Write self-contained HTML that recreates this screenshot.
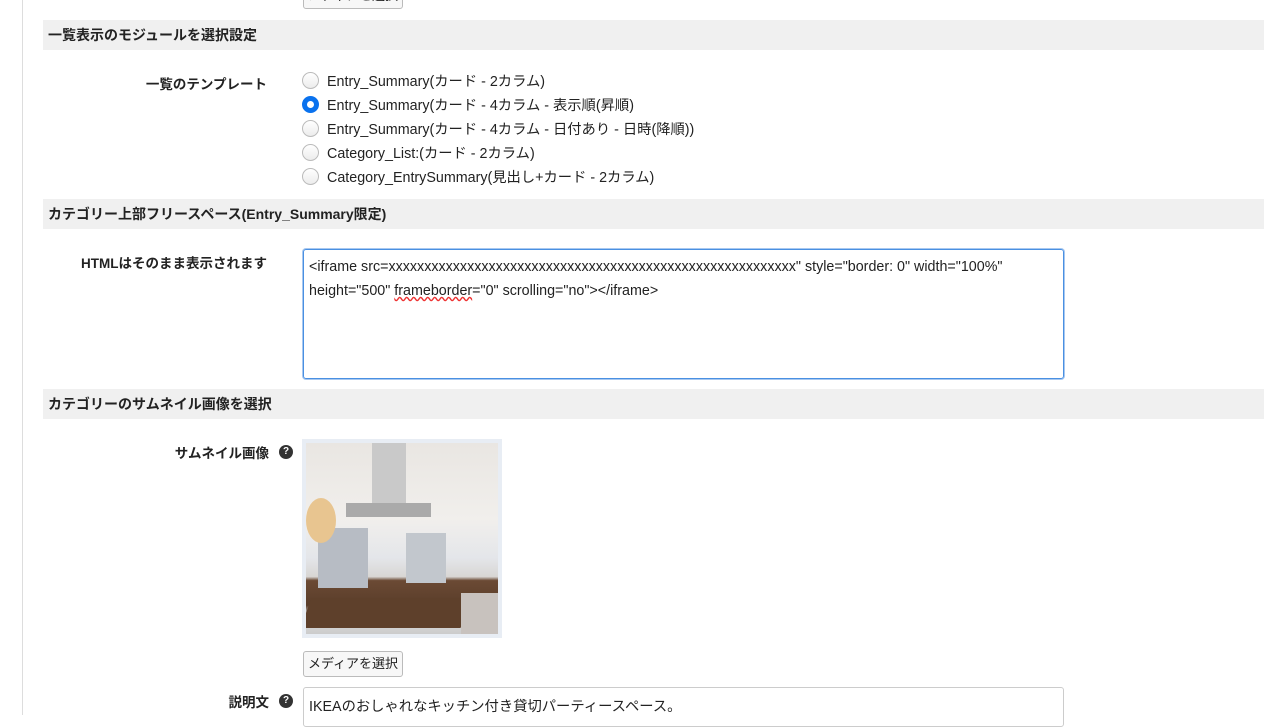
<!DOCTYPE html>
<html><head><meta charset="utf-8"><style>
body{margin:0;width:1280px;height:715px;overflow:hidden;background:#fff;font-family:"Liberation Sans","Noto Sans CJK JP",sans-serif;font-size:14px;color:#222;position:relative}
.a{position:absolute}
.vl{left:22px;top:0;width:1px;height:715px;background:#ddd}
.hd{left:43px;width:1221px;height:30px;background:#f0f0f0;font-weight:bold;font-size:14px;line-height:30px;padding-left:5px;box-sizing:border-box}
.lbl{font-weight:bold;font-size:13.5px;text-align:right;width:225px;left:42px}
.btn{border:1px solid #bbb;border-radius:3px;background:#f7f7f7;font-size:13px;text-align:center;box-sizing:border-box;width:100px;height:26px;line-height:24px}
.r{left:302px;font-size:14.3px;height:20px;line-height:20px}
.r i{display:inline-block;width:17px;height:17px;border-radius:50%;border:1px solid #bbb;background:linear-gradient(#fff,#ececec);box-sizing:border-box;vertical-align:-3px;margin-right:8px}
.r i.on{border:5px solid #0a72ee;background:#fff}
.q{width:14px;height:14px;border-radius:50%;background:#333;color:#fff;font-size:10px;font-weight:bold;text-align:center;line-height:14px}
</style></head><body>
<div class="a vl"></div>
<div class="a btn" style="left:303px;top:-17px">メディアを選択</div>
<div class="a hd" style="top:20px">一覧表示のモジュールを選択設定</div>
<div class="a lbl" style="top:73px">一覧のテンプレート</div>
<div class="a r" style="top:72px"><i></i>Entry_Summary(カード - 2カラム)</div>
<div class="a r" style="top:96px"><i class="on"></i>Entry_Summary(カード - 4カラム - 表示順(昇順)</div>
<div class="a r" style="top:120px"><i></i>Entry_Summary(カード - 4カラム - 日付あり - 日時(降順))</div>
<div class="a r" style="top:144px"><i></i>Category_List:(カード - 2カラム)</div>
<div class="a r" style="top:168px"><i></i>Category_EntrySummary(見出し+カード - 2カラム)</div>
<div class="a hd" style="top:199px">カテゴリー上部フリースペース(Entry_Summary限定)</div>
<div class="a lbl" style="top:252px">HTMLはそのまま表示されます</div>
<div class="a" style="left:303px;top:249px;width:761px;height:130px;border:1px solid #4a90e2;border-radius:3px;box-shadow:0 0 0 1px #a8c8f0;box-sizing:border-box;padding:5px 5px;font-size:14.3px;line-height:24px">&lt;iframe src=xxxxxxxxxxxxxxxxxxxxxxxxxxxxxxxxxxxxxxxxxxxxxxxxxxxxxxxxx" style="border: 0" width="100%" height="500" <span style="text-decoration:underline wavy #e33">frameborder</span>="0" scrolling="no"&gt;&lt;/iframe&gt;</div>
<div class="a hd" style="top:389px">カテゴリーのサムネイル画像を選択</div>
<div class="a lbl" style="top:442px;width:227px">サムネイル画像</div>
<div class="a q" style="left:279px;top:445px">?</div>
<div class="a" style="left:302px;top:439px;width:200px;height:199px;background:#e8edf4"></div>
<div class="a" style="left:306px;top:443px;width:192px;height:191px;background:linear-gradient(#e9e6e2 0%,#f1efec 40%,#e4e6ea 60%,#d8d6d4 70%,#6b4a34 72%,#5a3d2a 85%,#ddd 90%,#ccc 100%);overflow:hidden">
<div class="a" style="left:12px;top:85px;width:50px;height:60px;background:#b7bcc4"></div>
<div class="a" style="left:100px;top:90px;width:40px;height:50px;background:#c2c7cd"></div>
<div class="a" style="left:66px;top:0;width:34px;height:60px;background:#c9c9c9"></div>
<div class="a" style="left:40px;top:60px;width:85px;height:14px;background:#aaa"></div>
<div class="a" style="left:0;width:30px;height:45px;border-radius:50%;background:#e8c590;top:55px"></div>
<div class="a" style="left:0;top:155px;width:160px;height:30px;background:#5e402b;transform:skewX(-20deg)"></div>
<div class="a" style="left:155px;top:150px;width:37px;height:41px;background:#c8c2be"></div>
</div>
<div class="a btn" style="left:303px;top:651px">メディアを選択</div>
<div class="a lbl" style="top:691px;width:227px">説明文</div>
<div class="a q" style="left:279px;top:694px">?</div>
<div class="a" style="left:303px;top:687px;width:761px;height:40px;border:1px solid #ccc;border-radius:3px;box-sizing:border-box;padding:7px 5px;font-size:14.3px">IKEAのおしゃれなキッチン付き貸切パーティースペース。</div>
</body></html>
